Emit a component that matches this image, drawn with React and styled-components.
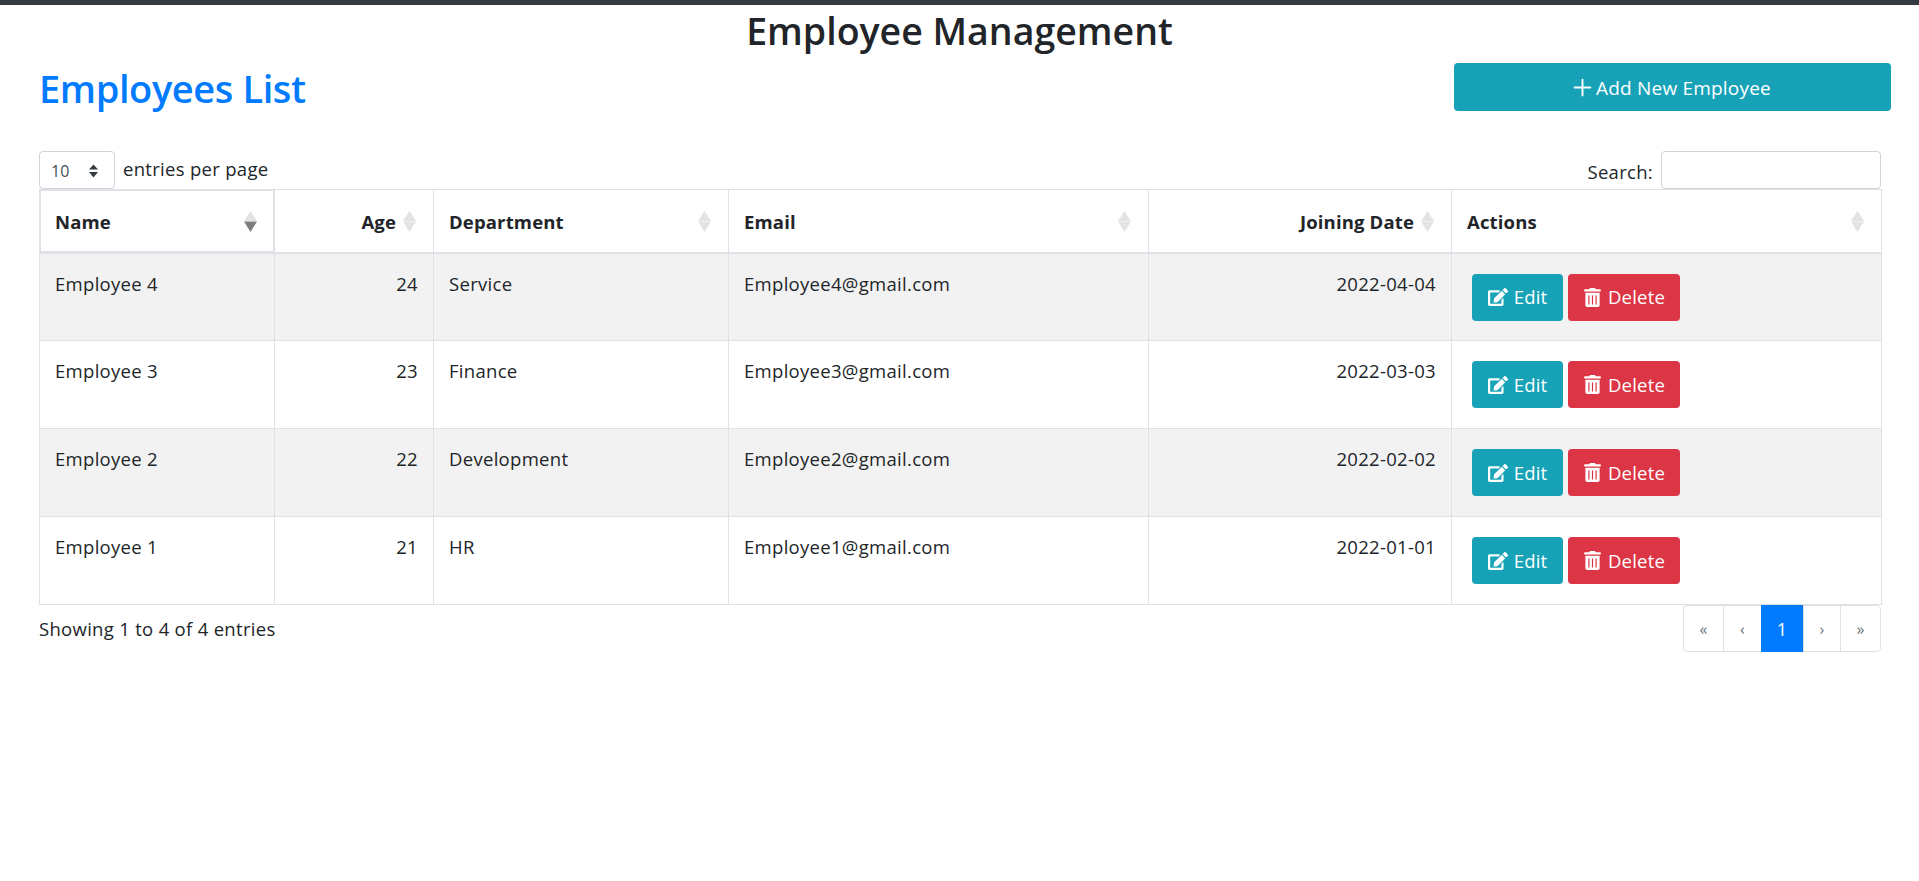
import React from 'react';
import styled, { createGlobalStyle } from 'styled-components';
import { FaEdit, FaTrashAlt } from 'react-icons/fa';
import { Plus } from 'lucide-react';

const Global = createGlobalStyle`
  html, body { margin: 0; padding: 0; background: #fff; }
  body {
    font-family: "Open Sans", "Noto Sans", "Liberation Sans", sans-serif;
    font-size: 18.5px;
    letter-spacing: 0.3px;
    color: #212529;
  }
`;

const TopBar = styled.div`
  height: 5px;
  background: #343a40;
`;

const Title = styled.h2`
  margin: 0;
  height: 46px;
  line-height: 52px;
  font-size: 37.5px;
  font-weight: 600;
  text-align: center;
  letter-spacing: 0;
`;

const Page = styled.div`
  padding: 0 38px 0 39px;
`;

const Heading = styled.div`
  display: flex;
  justify-content: space-between;
  align-items: flex-start;
  margin-right: -10px;
`;

const ListTitle = styled.h1`
  margin: 12px 0 0;
  font-size: 38px;
  line-height: 50px;
  font-weight: 600;
  color: #007bff;
  letter-spacing: -0.4px;
`;

const AddButton = styled.button`
  display: flex;
  align-items: center;
  justify-content: center;
  width: 437px;
  height: 48px;
  margin-top: 12px;
  padding: 1px 5px 0 0;
  border: 0;
  border-radius: 4px;
  background: #17a2b8;
  color: #fff;
  font: inherit;
  font-size: 19px;
  letter-spacing: 0.2px;
`;

const Controls = styled.div`
  display: flex;
  justify-content: space-between;
  margin-top: 38px;
  height: 38px;
`;

const Group = styled.label`
  display: flex;
  align-items: ${p => (p.$top ? 'flex-start' : 'center')};
  gap: 8px;
`;

const GroupText = styled.span`
  line-height: 36px;
`;

const SearchLabel = styled.span`
  padding-top: 2px;
`;

const Select = styled.div`
  display: flex;
  align-items: center;
  justify-content: space-between;
  box-sizing: border-box;
  width: 76px;
  height: 38px;
  padding: 2px 15px 0 11px;
  border: 1px solid #ced4da;
  border-radius: 4px;
  color: #495057;
  font-size: 16px;
  letter-spacing: 0;
`;

const SearchInput = styled.input`
  box-sizing: border-box;
  width: 220px;
  height: 38px;
  border: 1px solid #ced4da;
  border-radius: 4px;
  background: #fff;
`;

const Table = styled.table`
  width: 100%;
  table-layout: fixed;
  border-collapse: collapse;
  border: 1px solid #dee2e6;
`;

const Th = styled.th`
  position: relative;
  box-sizing: border-box;
  height: 63px;
  padding: 2px 37px 0 15px;
  border: 1px solid #dee2e6;
  border-bottom-width: 2px;
  font-size: 18.5px;
  font-weight: 700;
  letter-spacing: 0.15px;
  text-align: ${p => (p.$right ? 'right' : 'left')};
  ${p => p.$active && 'box-shadow: inset 0 0 0 1px #dee2e6;'}
`;

const SortIcon = styled.svg`
  position: absolute;
  right: 17px;
  top: 50%;
  width: 13px;
  height: 21px;
  margin-top: -10px;
`;

const Row = styled.tr`
  background: ${p => (p.$striped ? '#f2f2f2' : '#fff')};
`;

const Td = styled.td`
  box-sizing: border-box;
  height: 88px;
  padding: 18px 15px 12px;
  border: 1px solid #dee2e6;
  vertical-align: top;
  line-height: 24px;
  text-align: ${p => (p.$right ? 'right' : 'left')};
`;

const ActionsCell = styled(Td)`
  padding-top: 12px;
`;

const Actions = styled.div`
  display: flex;
  gap: 5px;
  padding: 8px 0 0 5px;
`;

const ActionButton = styled.button`
  display: flex;
  align-items: center;
  justify-content: center;
  gap: 6px;
  box-sizing: border-box;
  width: ${p => (p.$danger ? '112px' : '91px')};
  height: 47px;
  padding: 0;
  border: 0;
  border-radius: 4px;
  background: ${p => (p.$danger ? '#dc3545' : '#17a2b8')};
  color: #fff;
  font: inherit;
  font-size: 18.5px;
  letter-spacing: 0.2px;
`;

const Footer = styled.div`
  display: flex;
  justify-content: space-between;
  align-items: flex-start;
`;

const Info = styled.div`
  line-height: 48px;
`;

const Pagination = styled.div`
  display: flex;
  height: 47px;
  box-sizing: border-box;
  border: 1px solid #dee2e6;
  border-radius: 4px;
`;

const PageLink = styled.div`
  display: flex;
  align-items: center;
  justify-content: center;
  box-sizing: border-box;
  width: ${p => p.$w}px;
  margin: ${p => (p.$active ? '-1px 0' : '0')};
  border-left: ${p => (p.$first || p.$active ? '0' : '1px solid #dee2e6')};
  background: ${p => (p.$active ? '#007bff' : 'transparent')};
  color: ${p => (p.$active ? '#fff' : '#6c757d')};
  font-size: ${p => (p.$active ? '18px' : '16px')};
`;

const rows = [
  ['Employee 4', 24, 'Service', 'Employee4@gmail.com', '2022-04-04'],
  ['Employee 3', 23, 'Finance', 'Employee3@gmail.com', '2022-03-03'],
  ['Employee 2', 22, 'Development', 'Employee2@gmail.com', '2022-02-02'],
  ['Employee 1', 21, 'HR', 'Employee1@gmail.com', '2022-01-01'],
];

const columns = [
  { label: 'Name', width: 235, active: true },
  { label: 'Age', width: 159, right: true },
  { label: 'Department', width: 295 },
  { label: 'Email', width: 420 },
  { label: 'Joining Date', width: 303, right: true },
  { label: 'Actions', width: 430 },
];

const pages = [
  { t: '«', w: 39, first: true },
  { t: '‹', w: 38 },
  { t: '1', w: 42, active: true },
  { t: '›', w: 37 },
  { t: '»', w: 40 },
];

const Sort = ({ active }) => (
  <SortIcon viewBox="0 0 13 21">
    <path d="M6.5 0 L13 10 H0 Z" fill="#e2e4e4" />
    <path d="M6.5 21 L13 10.5 H0 Z" fill={active ? '#7d7d7d' : '#e2e4e4'} />
  </SortIcon>
);

export default function App() {
  return (
    <>
      <Global />
      <TopBar />
      <Title>Employee Management</Title>
      <Page>
        <Heading>
          <ListTitle>Employees List</ListTitle>
          <AddButton>
            <Plus size={27} strokeWidth={1.7} />
            Add New Employee
          </AddButton>
        </Heading>
        <Controls>
          <Group $top>
            <Select>
              10
              <svg width="11" height="14" viewBox="0 0 11 14">
                <path d="M5.5 0.5 L10 5.5 H1 Z M5.5 13.5 L1 8 H10 Z" fill="#343a40" />
              </svg>
            </Select>
            <GroupText>entries per page</GroupText>
          </Group>
          <Group>
            <SearchLabel>Search:</SearchLabel>
            <SearchInput />
          </Group>
        </Controls>
        <Table>
          <colgroup>
            {columns.map(c => (
              <col key={c.label} style={{ width: c.width }} />
            ))}
          </colgroup>
          <thead>
            <tr>
              {columns.map(c => (
                <Th key={c.label} $right={c.right} $active={c.active}>
                  {c.label}
                  <Sort active={c.active} />
                </Th>
              ))}
            </tr>
          </thead>
          <tbody>
            {rows.map((r, i) => (
              <Row key={r[0]} $striped={i % 2 === 0}>
                <Td>{r[0]}</Td>
                <Td $right>{r[1]}</Td>
                <Td>{r[2]}</Td>
                <Td>{r[3]}</Td>
                <Td $right>{r[4]}</Td>
                <ActionsCell>
                  <Actions>
                    <ActionButton>
                      <FaEdit size={20} />
                      Edit
                    </ActionButton>
                    <ActionButton $danger>
                      <FaTrashAlt size={19} />
                      Delete
                    </ActionButton>
                  </Actions>
                </ActionsCell>
              </Row>
            ))}
          </tbody>
        </Table>
        <Footer>
          <Info>Showing 1 to 4 of 4 entries</Info>
          <Pagination>
            {pages.map(p => (
              <PageLink key={p.t} $w={p.w} $active={p.active} $first={p.first}>
                {p.t}
              </PageLink>
            ))}
          </Pagination>
        </Footer>
      </Page>
    </>
  );
}
